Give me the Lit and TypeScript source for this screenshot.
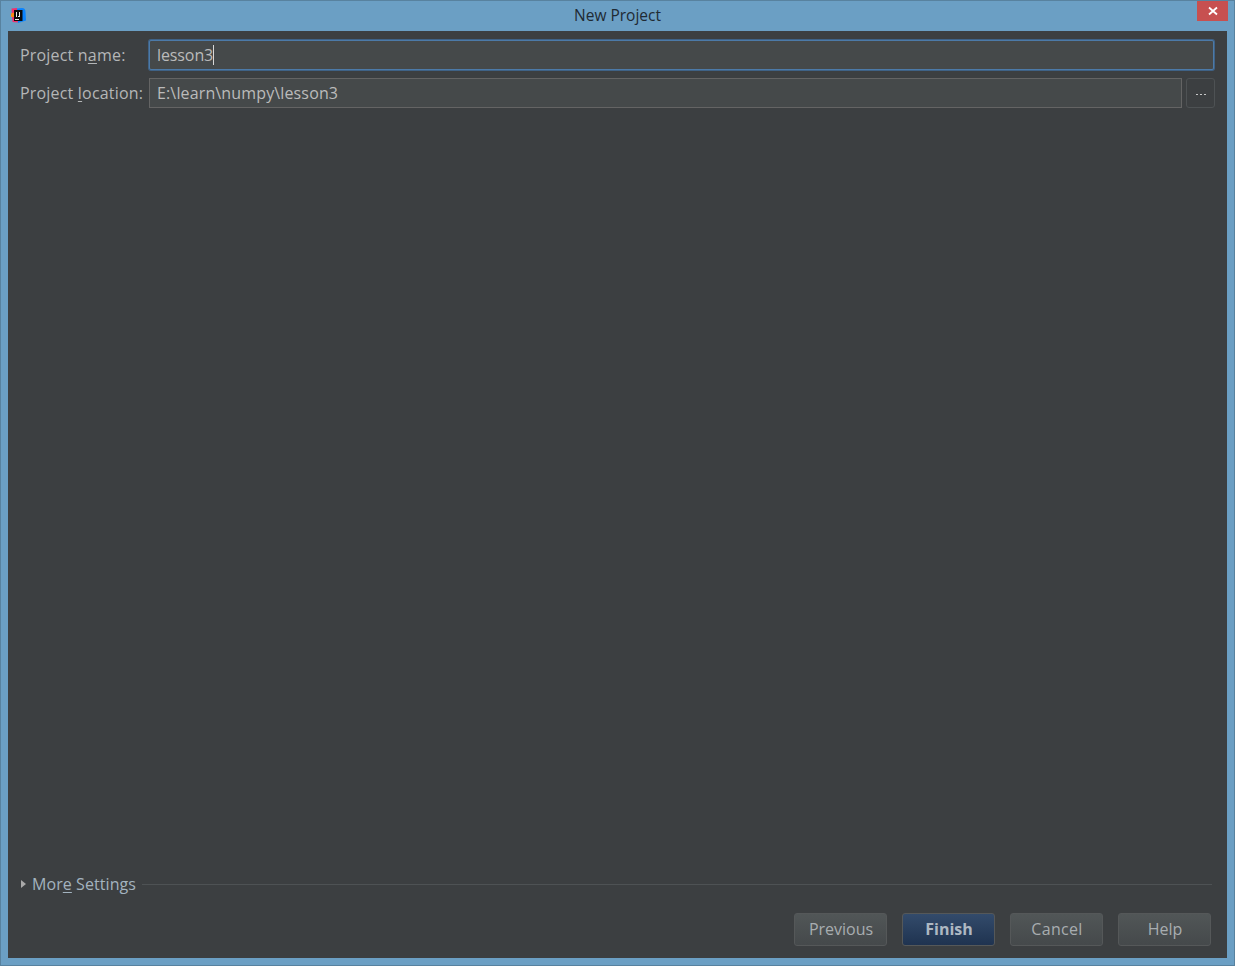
import { LitElement, html, css } from "lit";
import { customElement } from "lit/decorators.js";

@customElement("app-root")
export class AppRoot extends LitElement {
  static styles = css`
    :host { display: block; width: 1235px; height: 966px; overflow: hidden; font-family: "Open Sans", "Noto Sans", sans-serif; font-size: 16px; }
    .window { box-sizing: border-box; width: 1235px; height: 966px; display: flex; flex-direction: column; background: #6b9fc4; border: 1px solid #58829f; }
    .title { height: 30px; flex: none; display: grid; grid-template-columns: 1fr auto 1fr; align-items: center; padding: 0 6px; }
    .title-text { color: #1f2a33; font-size: 15.5px; line-height: 28px; padding-bottom: 2px; }
    .logo { width: 16px; height: 16px; display: block; margin-left: 4px; }
    .close { justify-self: end; align-self: start; width: 31px; height: 20px; background: #c75050; display: flex; align-items: center; justify-content: center; }
    .body { flex: 1; margin: 0 7px 7px 7px; background: #3c3f41; display: flex; flex-direction: column; padding: 9px 12px 12px 12px; min-height: 0; color: #bbbbbb; }
    .row { display: flex; align-items: center; }
    .row + .row { margin-top: 8px; }
    .label { width: 129px; flex: none; color: #b4b6b7; letter-spacing: 0.19px; }
    u { text-underline-offset: 2px; }
    .field { box-sizing: border-box; flex: 1; height: 30px; background: #45494a; border: 1px solid #646464; padding-left: 7px; line-height: 28px; color: #bbbbbb; display: flex; align-items: center; }
    .field.path { letter-spacing: 0.14px; }
    .field.focus { border: 1px solid #4c7aa8; box-shadow: 0 0 0 1px #3f6286; border-radius: 2px; margin-right: 1px; letter-spacing: -0.1px; }
    .caret { width: 1px; height: 20px; background: #d8d8d8; }
    .browse { box-sizing: border-box; width: 29px; height: 30px; margin-left: 4px; border: 1px solid #4e5254; border-radius: 3px; color: #bbbbbb; display: flex; align-items: center; justify-content: center; }
    .dots { display: flex; gap: 2px; margin-top: 2px; }
    .dots i { width: 2px; height: 1px; background: #c8c8c8; display: block; }
    .spacer { flex: 1; }
    .more { display: flex; align-items: center; color: #a3b3bf; margin-top: -1px; letter-spacing: 0.08px; }
    .tri { width: 0; height: 0; border-left: 5px solid #a9a9a9; border-top: 4px solid transparent; border-bottom: 4px solid transparent; margin: 0 6px 0 1px; }
    .rule { flex: 1; height: 1px; background: #4e5254; margin: 0 3px 0 6px; }
    .buttons { display: flex; justify-content: flex-end; gap: 15px; margin-top: 18px; padding-right: 4px; }
    .btn { box-sizing: border-box; width: 93px; height: 33px; border: 1px solid #555859; border-radius: 3px; background: linear-gradient(#515657, #45494b); color: #a8adb0; display: flex; align-items: center; justify-content: center; padding: 0 0 2px 1px; }
    .btn.primary { background: linear-gradient(#334b6b, #1f3350); color: #aeb8c2; font-weight: 700; }
    .btn.wide { letter-spacing: 0.3px; }
  `;

  render() {
    return html`<div class="window">
      <div class="title">
        <svg class="logo" viewBox="0 0 16 16" aria-hidden="true">
          <path d="M0.5 0.5 L6 0 L7 14.5 L1.5 14Z" fill="#f0306e" />
          <path d="M0 5.5 L3 4.5 L3 9 L0 9Z" fill="#fb8a14" />
          <path d="M6 0.5 L11 0 Q14.5 0 14.5 4 L15 12.5 L7 15Z" fill="#0a84ff" />
          <rect x="3" y="2" width="8.5" height="11" fill="#0b0b0b" />
          <rect x="4" y="11" width="4" height="1" fill="#eee" />
          <rect x="5" y="4" width="1" height="5" fill="#eee" />
          <rect x="8" y="4" width="1" height="5" fill="#eee" />
          <rect x="7" y="8" width="2" height="1" fill="#eee" />
        </svg>
        <div class="title-text">New Project</div>
        <div class="close">
          <svg width="10" height="10" viewBox="0 0 10 10" aria-hidden="true"><path d="M1 1.5 L9 8.5 M9 1.5 L1 8.5" stroke="#fff" stroke-width="1.8" /></svg>
        </div>
      </div>
      <div class="body">
        <div class="row">
          <div class="label">Project n<u>a</u>me:</div>
          <div class="field focus">lesson3<span class="caret"></span></div>
        </div>
        <div class="row">
          <div class="label">Project <u>l</u>ocation:</div>
          <div class="field path">E:\\learn\\numpy\\lesson3</div>
          <div class="browse"><span class="dots"><i></i><i></i><i></i></span></div>
        </div>
        <div class="spacer"></div>
        <div class="more">
          <span class="tri"></span>
          <span>Mor<u>e</u> Settings</span>
          <span class="rule"></span>
        </div>
        <div class="buttons">
          <div class="btn">Previous</div>
          <div class="btn primary">Finish</div>
          <div class="btn wide">Cancel</div>
          <div class="btn">Help</div>
        </div>
      </div>
    </div>`;
  }
}
